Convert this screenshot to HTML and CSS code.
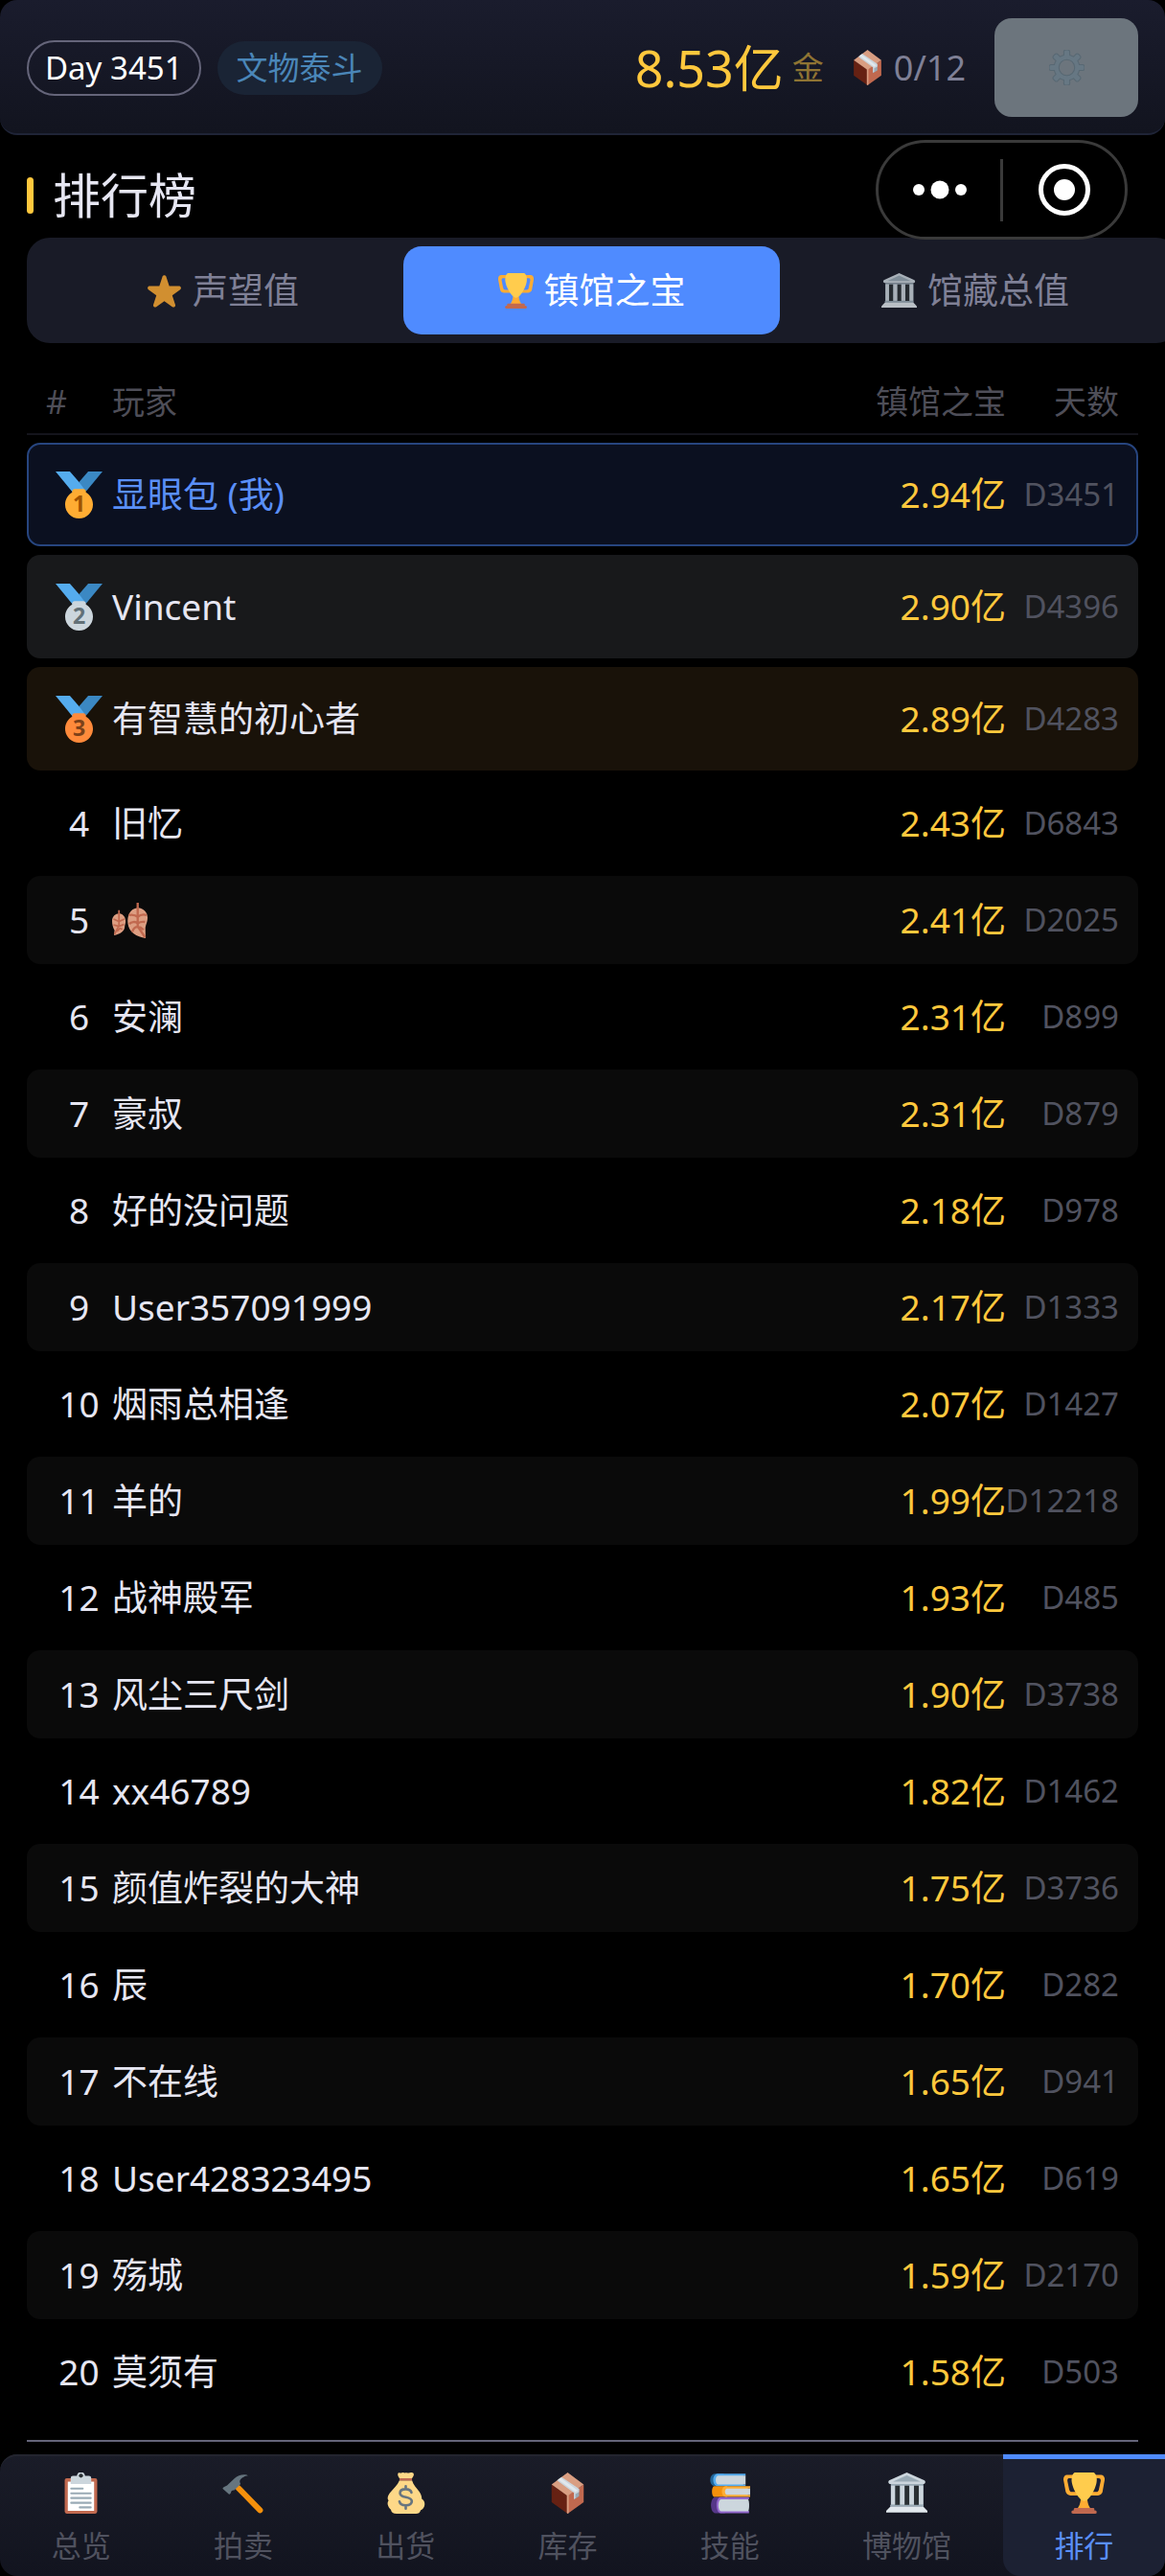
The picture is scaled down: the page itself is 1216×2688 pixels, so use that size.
FILE: index.html
```html
<!DOCTYPE html>
<html lang="zh-CN">
<head>
<meta charset="utf-8">
<meta name="viewport" content="width=device-width, initial-scale=1">
<title>排行榜</title>
<link rel="stylesheet" href="styles.css">
</head>
<body>
<svg class="sprite" aria-hidden="true">
  <symbol id="i-trophy" viewBox="0 0 36 36">
    <path fill="#FFAC33" d="M5.123 5h6C12.227 5 13 4.896 13 6V4c0-1.104-.773-2-1.877-2h-8c-2 0-3.583 2.125-3 5 0 0 1.791 9.375 1.917 9.958C2.373 18.5 4.164 20 6.081 20h6.958c1.105 0-.039-1.896-.039-3v-2c0 1.104-.773 2-1.877 2h-4c-1.104 0-1.833-1.042-2-2S3.539 7.667 3.539 7.667C3.206 5.75 4.018 5 5.123 5zm25.812 0h-6C23.831 5 22 4.896 22 6V4c0-1.104 1.831-2 2.935-2h8c2 0 3.584 2.125 3 5 0 0-1.633 9.419-1.771 10-.354 1.5-2.042 3-4 3h-7.146C21.914 20 22 18.104 22 17v-2c0 1.104 1.831 2 2.935 2h4c1.104 0 1.834-1.042 2-2s1.584-7.333 1.584-7.333C32.851 5.75 32.04 5 30.935 5zM20.832 22c0-6.958-2.709 0-2.709 0s-3-6.958-3 0-3.291 10-3.291 10h12.292c-.001 0-3.292-3.042-3.292-10z"/>
    <path fill="#FFCC4D" d="M29.123 6.577c0 6.775-6.77 18.423-11 18.423-4.231 0-11-11.649-11-18.423 0-5.442 2.521-6.577 3-6.577h16c.478 0 3 1.135 3 6.577z"/>
    <path fill="#C1694F" d="M27 33c0-1.104.227-2-.877-2h-16C9.018 31 9 31.896 9 33v1h18z"/>
    <path fill="#C1694F" d="M29 34.625c0 .76.165 1.375-1.252 1.375H8.498C7.206 36 7 35.385 7 34.625v-.25C7 33.615 7.738 33 8.498 33h19.25c.759 0 1.252.615 1.252 1.375v.25z"/>
  </symbol>
  <symbol id="i-museum" viewBox="0 0 36 36">
    <path fill="#99AAB5" d="M4 10h28.500v20H4z"/>
    <path fill="#292F33" d="M7.700 11.500h4.200V29H7.700zM16 11.500h4.200V29H16zM24.300 11.500h4.200V29h-4.200z"/>
    <path fill="#CCD6DD" d="M4.200 11.500h3.500V28H4.200zM12.200 11.500h3.800V28h-3.800zM20.300 11.500h3.900V28h-3.900zM28.600 11.500h3.700V28h-3.700z"/>
    <path fill="#CCD6DD" d="M18 0 2.500 7C1.500 8 1.700 9.500 3 10h30c1.500-.5 1.500-2 .5-3z"/>
    <path fill="#99AAB5" d="M18 2.500 6 8h24zM3.500 28.300h29V30h-29z"/>
    <path fill="#E1E8ED" d="M3.500 30h29L36 33.500v1.500H0v-1.500z"/>
  </symbol>
  <symbol id="i-box" viewBox="0 0 36 36">
    <path fill="#662113" d="M4 10.500 18 20v16L4 26z"/>
    <path fill="#C1694F" d="M32 10.500 18 20v16l14-10z"/>
    <path fill="#D99E82" d="M18 0 4 10.500 18 20.500l14-10z"/>
    <path fill="#D99E82" d="M17.300 19.500h1.600V35.300L18 36l-.7-.6z"/>
    <path fill="#99AAB5" d="M23.500 17.500 28 14.300v6.500l-4.500 2.900z"/>
    <path fill="#CCD6DD" d="M12.700 3.900 8.700 7l14.800 10.700v5.500l1.300-.8v-3.600L28 17V14.300z"/>
    <path fill="#E1E8ED" d="m11.800 4.700-2 1.500 15 11 2-1.500z"/>
  </symbol>
  <symbol id="i-medal" viewBox="0 0 36 36">
    <path fill="#55ACEE" d="M18 8l-7-8H0l14 17 11.521-4.750z"/>
    <path fill="#3B88C3" d="M25 0l-7 8 5.390 7.312 1.227-1.489L36 0z"/>
    <path fill="currentColor" d="M23.205 16.026c.08-.217.131-.448.131-.693 0-1.104-.896-2-2-2h-6.667c-1.104 0-2 .896-2 2 0 .245.05.476.131.693-3.258 1.826-5.464 5.307-5.464 9.307C7.335 31.224 12.111 36 18.002 36s10.667-4.776 10.667-10.667c0-4-2.206-7.481-5.464-9.307z"/>
  </symbol>
</svg>

<div class="app">
  <header class="topbar">
    <span class="pill pill-day">Day 3451</span>
    <span class="pill pill-rank">文物泰斗</span>
    <div class="wallet">
      <span class="gold">8.53亿</span>
      <span class="unit">金</span>
    </div>
    <div class="stock">
      <svg class="ico-sm" aria-hidden="true"><use href="#i-box"/></svg>
      <span>0/12</span>
    </div>
    <button class="settings" type="button" aria-label="设置">
      <svg class="ico-sm" viewBox="0 0 36 36" aria-hidden="true"><path class="gear" d="M34 15h-3.362c-.324-1.369-.864-2.651-1.582-3.814l2.379-2.379c.781-.781.781-2.048 0-2.829l-1.414-1.414c-.781-.781-2.047-.781-2.828 0l-2.379 2.379C23.650 6.225 22.369 5.686 21 5.362V2c0-1.104-.896-2-2-2h-2c-1.104 0-2 .896-2 2v3.362c-1.369.324-2.651.864-3.814 1.582L8.808 4.565c-.781-.781-2.048-.781-2.828 0L4.565 5.979c-.781.781-.781 2.048-.001 2.829l2.379 2.379C6.225 12.350 5.686 13.632 5.362 15H2c-1.104 0-2 .896-2 2v2c0 1.104.896 2 2 2h3.362c.324 1.368.864 2.650 1.582 3.813l-2.379 2.379c-.78.78-.78 2.048.001 2.829l1.414 1.414c.78.78 2.047.78 2.828 0l2.379-2.379c1.163.719 2.445 1.258 3.814 1.582V34c0 1.104.896 2 2 2h2c1.104 0 2-.896 2-2v-3.362c1.368-.324 2.650-.864 3.813-1.582l2.379 2.379c.781.781 2.047.781 2.828 0l1.414-1.414c.781-.781.781-2.048 0-2.829l-2.379-2.379c.719-1.163 1.258-2.445 1.582-3.813H34c1.104 0 2-.896 2-2v-2c0-1.104-.896-2-2-2zM18 26c-4.418 0-8-3.582-8-8s3.582-8 8-8 8 3.582 8 8-3.582 8-8 8z"/></svg>
    </button>
  </header>

  <div class="capsule">
    <button type="button" class="cap-btn" aria-label="更多">
      <svg width="56" height="20" viewBox="0 0 56 20" aria-hidden="true"><g fill="#fff"><circle cx="6" cy="10" r="6"/><circle cx="28" cy="10" r="9.500"/><circle cx="50" cy="10" r="6"/></g></svg>
    </button>
    <button type="button" class="cap-btn" aria-label="关闭">
      <svg width="54" height="54" viewBox="0 0 54 54" aria-hidden="true"><circle cx="27" cy="27" r="24.500" fill="none" stroke="#fff" stroke-width="5"/><circle cx="27" cy="27" r="11" fill="#fff"/></svg>
    </button>
  </div>

  <main class="content">
    <h1 class="title">排行榜</h1>

    <div class="tabs">
      <button type="button" class="tab"><svg class="ico-sm" viewBox="0 0 36 36" aria-hidden="true"><path fill="#FFAC33" d="M27.287 34.627c-.404 0-.806-.124-1.152-.371L18 28.422l-8.135 5.834c-.343.247-.747.371-1.150.371-.404 0-.807-.125-1.151-.375-.687-.5-.972-1.382-.713-2.186l3.100-9.540-8.061-5.746c-.692-.498-.98-1.379-.72-2.189.26-.81 1.004-1.358 1.852-1.367l9.949-.015 3.100-9.553C16.335 2.850 17.115 2.292 18 2.292c.885 0 1.665.558 1.930 1.365l3.084 9.553 9.965.015c.848.009 1.592.557 1.852 1.367.26.81-.028 1.691-.72 2.189l-8.061 5.746 3.100 9.540c.259.804-.026 1.686-.713 2.186-.344.25-.747.374-1.150.374z"/></svg>声望值</button>
      <button type="button" class="tab active"><svg class="ico-sm" aria-hidden="true"><use href="#i-trophy"/></svg>镇馆之宝</button>
      <button type="button" class="tab"><svg class="ico-sm" aria-hidden="true"><use href="#i-museum"/></svg>馆藏总值</button>
    </div>

    <table class="board">
      <thead>
        <tr><th class="c-rank">#</th><th class="c-name">玩家</th><th class="c-val">镇馆之宝</th><th class="c-day">天数</th></tr>
      </thead>
      <tbody>
        <tr class="top me"><td class="c-rank"><svg class="medal m1" viewBox="0 0 36 36"><use href="#i-medal"/><text x="18" y="31">1</text></svg></td><td class="c-name">显眼包 (我)</td><td class="c-val">2.94亿</td><td class="c-day">D3451</td></tr>
        <tr class="top second"><td class="c-rank"><svg class="medal m2" viewBox="0 0 36 36"><use href="#i-medal"/><text x="18" y="31">2</text></svg></td><td class="c-name">Vincent</td><td class="c-val">2.90亿</td><td class="c-day">D4396</td></tr>
        <tr class="top third"><td class="c-rank"><svg class="medal m3" viewBox="0 0 36 36"><use href="#i-medal"/><text x="18" y="31">3</text></svg></td><td class="c-name">有智慧的初心者</td><td class="c-val">2.89亿</td><td class="c-day">D4283</td></tr>
        <tr><td class="c-rank">4</td><td class="c-name">旧忆</td><td class="c-val">2.43亿</td><td class="c-day">D6843</td></tr>
        <tr><td class="c-rank">5</td><td class="c-name"><svg class="ico-sm" viewBox="0 0 36 36" role="img" aria-label="落叶">
          <path fill="#DD9E82" d="M7 11c3 0 6.500 2.500 6.700 7.500 0 3-.8 4-.9 6-.3 4.500-5 7.500-10.800 8.500L2.500 28C.8 25 0 22 0 18.500 0 14 3.500 11 7 11zM26 5c6 .5 10 4.500 10 10 0 5-2 7-2.200 11L34 36c-9-1-17-6-18-15-.8-8 2-15 10-16z"/>
          <path fill="none" stroke="#C1694F" stroke-width="1.700" d="M7 7.500V23L2.500 32M1.500 16.500 7 19l5.500-2.500M1.500 22.500 7 24l5-2M5 29l3-3 2.500 1"/>
          <path fill="none" stroke="#C1694F" stroke-width="2.300" d="M26 0v24l7.500 11M17 12.500c4-.5 7 0 9 2 2-2 5-3 9-2M17.500 21.500c2-2 6-3 8.500-.5 2-1.500 4-2 7.500-1.500M20.500 29.500c1-3 3-5 5.500-5 2 0 4 1 6 3"/></svg></td><td class="c-val">2.41亿</td><td class="c-day">D2025</td></tr>
        <tr><td class="c-rank">6</td><td class="c-name">安澜</td><td class="c-val">2.31亿</td><td class="c-day">D899</td></tr>
        <tr><td class="c-rank">7</td><td class="c-name">豪叔</td><td class="c-val">2.31亿</td><td class="c-day">D879</td></tr>
        <tr><td class="c-rank">8</td><td class="c-name">好的没问题</td><td class="c-val">2.18亿</td><td class="c-day">D978</td></tr>
        <tr><td class="c-rank">9</td><td class="c-name">User357091999</td><td class="c-val">2.17亿</td><td class="c-day">D1333</td></tr>
        <tr><td class="c-rank">10</td><td class="c-name">烟雨总相逢</td><td class="c-val">2.07亿</td><td class="c-day">D1427</td></tr>
        <tr><td class="c-rank">11</td><td class="c-name">羊的</td><td class="c-val">1.99亿</td><td class="c-day">D12218</td></tr>
        <tr><td class="c-rank">12</td><td class="c-name">战神殿军</td><td class="c-val">1.93亿</td><td class="c-day">D485</td></tr>
        <tr><td class="c-rank">13</td><td class="c-name">风尘三尺剑</td><td class="c-val">1.90亿</td><td class="c-day">D3738</td></tr>
        <tr><td class="c-rank">14</td><td class="c-name">xx46789</td><td class="c-val">1.82亿</td><td class="c-day">D1462</td></tr>
        <tr><td class="c-rank">15</td><td class="c-name">颜值炸裂的大神</td><td class="c-val">1.75亿</td><td class="c-day">D3736</td></tr>
        <tr><td class="c-rank">16</td><td class="c-name">辰</td><td class="c-val">1.70亿</td><td class="c-day">D282</td></tr>
        <tr><td class="c-rank">17</td><td class="c-name">不在线</td><td class="c-val">1.65亿</td><td class="c-day">D941</td></tr>
        <tr><td class="c-rank">18</td><td class="c-name">User428323495</td><td class="c-val">1.65亿</td><td class="c-day">D619</td></tr>
        <tr><td class="c-rank">19</td><td class="c-name">殇城</td><td class="c-val">1.59亿</td><td class="c-day">D2170</td></tr>
        <tr><td class="c-rank">20</td><td class="c-name">莫须有</td><td class="c-val">1.58亿</td><td class="c-day">D503</td></tr>
      </tbody>
    </table>
  </main>

  <nav class="nav">
    <a href="#overview"><svg class="ico" viewBox="0 0 36 36" aria-hidden="true">
      <rect x="3.800" y="5" width="28.400" height="31" rx="1.800" fill="#C1694F"/><path fill="#fff" d="M6.500 8h23v25.500h-23z"/>
      <path fill="#CCD6DD" d="M11 3h3.500a3.500 3.500 0 0 1 7 0H25a2 2 0 0 1 2 2v5H9V5a2 2 0 0 1 2-2z"/><circle cx="18" cy="2.800" r="1.800" fill="#292F33"/>
      <path stroke="#99AAB5" stroke-width="1.800" stroke-linecap="round" d="M9.500 14h10M9.500 18.200h17M9.500 22.300h17M9.500 26.500h17M17 30.500h9.500"/></svg>总览</a>
    <a href="#auction"><svg class="ico" viewBox="0 0 36 36" aria-hidden="true">
      <path stroke="#F4900C" stroke-width="5" stroke-linecap="round" d="M14 13.500 33 33"/>
      <path fill="#66757F" d="M.5 14.300c-.5-.7.700-1.700 3.700-3L10.600 5.300C13 3 16 1.800 19 1.800c1.500 0 3.500.5 3.500 1-2.500.4-4 1-5 1.700-2.500 1.800-2.700 3.500-1.500 5.500l-5.500 5.500c-1.500-.3-2.300.3-2.800 1.500-.2 1.200-1 2.200-1.800 2z"/></svg>拍卖</a>
    <a href="#ship"><svg class="ico" viewBox="0 0 36 36" aria-hidden="true">
      <path fill="#FDD888" d="M12.500 7h11c1 4 4 6.500 6.500 10 1.500 2.500 2 4 2 6 2.500 1.500 3.500 5 1.500 8-1 1.500-2 1.500-2.500 2-.5 2-2 3-4 3H10c-3 0-4.500-1-5-3.500-3-3-3.500-6-2-8-1.500-2-.5-4.500 1-6.500C7 14.500 11 11 12.500 7z"/>
      <path fill="#FDD888" d="M11.500.5c1-.7 2 .4 3.200-.2 1.300-.6 2 .4 3.300 0 1.300-.4 2.200.5 3.300 0 1.400-.6 2.400-.3 3.200.2 1.200 1 .2 3-1 4.500h-11c-1.200-1.500-2-3.500-1-4.500z"/>
      <path fill="#BF6952" d="M12.500 5h11v2h-11z"/>
      <path fill="none" stroke="#67757F" stroke-width="2.200" stroke-linecap="round" d="M23 17.500c-.5-2-2.500-3-5-3-3 0-5 1.300-5 3.500 0 5 10.300 2.200 10.300 7.200 0 2.300-2.300 3.500-5.300 3.500s-5-1-5.500-3.300M18 12v2.500M18 28.700V31.500"/></svg>出货</a>
    <a href="#stock"><svg class="ico" aria-hidden="true"><use href="#i-box"/></svg>库存</a>
    <a href="#skill"><svg class="ico" viewBox="0 0 36 36" aria-hidden="true">
      <path fill="#226699" d="M5 1h8v11H5C-.2 11.500-.2 1.500 5 1z"/><path fill="#55ACEE" d="M7.500 1H32v2H30v7.500h2V12H7.500C2.500 11.500 2.500 1.500 7.500 1z"/><path fill="#CCD6DD" d="M8 2.800h24v7.700H8c-2.800-.5-2.800-7.200 0-7.700z"/>
      <path fill="#F4900C" d="M4.500 12H16v9.300H4.500c-2.500-.5-2.500-8.800 0-9.300z"/><path fill="#FFAC33" d="M14.500 12H36v2h-2v5.500h2v1.800H14.500c-4.300-.5-4.300-8.800 0-9.300z"/><path fill="#CCD6DD" d="M15.500 14H36v5.500H15.500c-2-.5-2-5 0-5.500z"/>
      <path fill="#553788" d="M5.500 21.500H14v14H5.500c-5-.5-5-13.500 0-14z"/><path fill="#9266CC" d="M10 21.500h25v2h-1.500v10H35v2H10c-4.500-.5-4.500-13.500 0-14z"/><path fill="#CCD6DD" d="M10.500 23.500H34c1.500 0 1.500 10.500 0 10.500H10.500c-3-.5-3-10 0-10.500z"/></svg>技能</a>
    <a href="#museum" class="wide"><svg class="ico" aria-hidden="true"><use href="#i-museum"/></svg>博物馆</a>
    <a href="#rank" class="current" aria-current="page"><svg class="ico" aria-hidden="true"><use href="#i-trophy"/></svg>排行</a>
  </nav>
</div>
</body>
</html>
```
FILE: styles.css
```css
* { box-sizing: border-box; }

body {
  margin: 0;
  background: #000;
  color: #e6e6f2;
  font-family: "Noto Sans", "Noto Sans CJK SC", sans-serif;
  font-size: 37px;
  line-height: 48px;
}

button {
  margin: 0;
  padding: 0;
  border: 0;
  background: none;
  color: inherit;
  font: inherit;
}

.sprite { display: none; }
.ico-sm { width: 37px; height: 37px; flex: none; }
.ico { width: 43px; height: 43px; }

.app {
  position: relative;
  display: flex;
  flex-direction: column;
  min-height: 100vh;
  overflow-x: clip;
}

/* Top bar */
.topbar {
  display: flex;
  align-items: center;
  padding: 19px 28px 17px;
  border-bottom: 2px solid #1f2437;
  border-radius: 18px;
  background: linear-gradient(#1a1c2d, #12141f);
}

.pill {
  padding: 4px 20px;
  border-radius: 29px;
  font-size: 33px;
}

.pill-day {
  margin-right: 17px;
  padding: 3px 17px;
  border: 2px solid #65657a;
  color: #fff;
}

.pill-rank {
  background: #1a2435;
  color: #4a86b8;
}

.wallet {
  display: flex;
  align-items: center;
  gap: 9px;
  margin-left: auto;
}

.gold { color: #ffc83d; font-size: 52px; }
.unit { color: #8f7433; font-size: 33px; }

.stock {
  display: flex;
  align-items: center;
  gap: 9px;
  margin: 0 30px 0 27px;
  color: #7f8096;
  font-size: 36px;
}

.settings {
  display: flex;
  align-items: center;
  justify-content: center;
  width: 150px;
  height: 103px;
  border-radius: 18px;
  background: #6c757d;
}

.gear { fill: #667783; stroke: #586873; stroke-width: 1; }

/* Floating mini-program controls */
.capsule {
  position: absolute;
  top: 146px;
  right: 39px;
  z-index: 2;
  display: flex;
  align-items: center;
  width: 263px;
  height: 104px;
  border: 3px solid #3a3a3a;
  border-radius: 52px;
}

.cap-btn {
  display: flex;
  flex: 1;
  align-items: center;
  justify-content: center;
  height: 65px;
}

.cap-btn + .cap-btn { border-left: 3px solid #3a3a3a; }

/* Page content */
.content {
  flex: 1;
  margin: 0 28px 13px;
  border-bottom: 2px solid #65657a;
}

.title {
  display: flex;
  align-items: center;
  gap: 20px;
  height: 107px;
  margin: 0;
  padding-top: 19px;
  font-size: 50px;
  font-weight: 400;
}

.title::before {
  content: "";
  width: 7px;
  height: 38px;
  border-radius: 4px;
  background: #ffc83d;
}

/* The strip runs past the right edge of the screen */
.tabs {
  display: grid;
  grid-template-columns: 377fr 393fr 408fr;
  margin-right: -43px;
  padding: 9px 9px 9px 16px;
  border-radius: 24px;
  background: #191b27;
}

.tab {
  display: flex;
  align-items: center;
  justify-content: center;
  gap: 11px;
  height: 92px;
  border-radius: 19px;
  color: #7f8096;
}

.tab .ico-sm { opacity: 0.8; }
.tab.active { background: #4f8bff; color: #fff; }
.tab.active .ico-sm { opacity: 1; }

/* Leaderboard */
.board { display: block; margin-top: 27px; }
.board thead { display: block; margin-bottom: 8px; border-bottom: 2px solid #14141c; }
.board tbody { display: flex; flex-direction: column; gap: 9px; }
.board tr { display: flex; align-items: center; height: 92px; padding: 0 20px; border-radius: 14px; }
.board thead tr { height: 67px; }
.board tbody tr:nth-child(odd) { background: #0a0a0a; }
.board tbody tr.top { height: 108px; }
.board tbody tr.me { padding: 0 18px; border: 2px solid #27457f; background: #0b1020; }
.board tbody tr.second { background: #18191b; }
.board tbody tr.third { background: #191209; }

.board th,
.board td { padding: 0; text-align: left; font-weight: 400; }
.board th { color: #4e4e58; font-size: 34px; }

.board .c-rank { width: 69px; }
.board td.c-rank { display: flex; justify-content: center; }
.board .c-name { flex: 1; }
.board td.c-name { display: flex; }
.board .c-val { text-align: right; }
.board td.c-val { color: #ffc83d; }
.board .c-day { display: flex; justify-content: flex-end; width: 118px; }
.board td.c-day { color: #50525f; font-size: 33px; }
.board tr.me .c-name { color: #5a8ff8; }

.medal { width: 49px; height: 49px; }
.medal text { font: 700 17px "Noto Sans", sans-serif; text-anchor: middle; }
.m1 { color: #ffac33; }
.m1 text { fill: #9e5200; }
.m2 { color: #ccd6dd; }
.m2 text { fill: #627077; }
.m3 { color: #ff8a3b; }
.m3 text { fill: #7c4119; }

/* Bottom navigation */
.nav {
  display: flex;
  height: 127px;
  border-radius: 18px;
  background: linear-gradient(#1a1c28, #12141f);
}

.nav a {
  display: flex;
  flex: 169;
  flex-direction: column;
  align-items: center;
  gap: 9px;
  padding-top: 17px;
  border-top: 2px solid #23252f;
  color: #50525f;
  font-size: 31px;
  text-decoration: none;
}

.nav a:first-child { border-top-left-radius: 18px; }
.nav a.wide { flex: 200; }

.nav a.current {
  padding-top: 14px;
  border-top: 5px solid #4f8bff;
  border-radius: 0 0 18px 18px;
  background: #1c2133;
  color: #5a8ff8;
}
```
